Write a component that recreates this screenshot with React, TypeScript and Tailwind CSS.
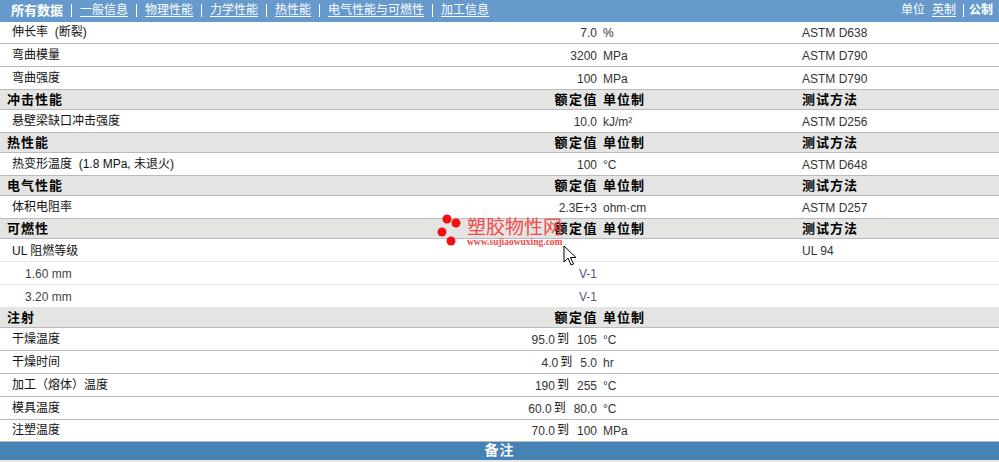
const cjk = "font-['Liberation_Sans','Noto_Sans_CJK_SC',sans-serif]"

type Row =
  | { kind: "head"; title: string; method?: boolean; h: string }
  | { kind: "data"; name: string; value?: string; to?: string; unit?: string; test?: string; h: string; sub?: boolean; faint?: boolean }

const rows: Row[] = [
  { kind: "data", name: "伸长率  (断裂)", value: "7.0", unit: "%", test: "ASTM D638", h: "h-[22px]" },
  { kind: "data", name: "弯曲模量", value: "3200", unit: "MPa", test: "ASTM D790", h: "h-[23px]" },
  { kind: "data", name: "弯曲强度", value: "100", unit: "MPa", test: "ASTM D790", h: "h-[23px]" },
  { kind: "head", title: "冲击性能", method: true, h: "h-[20px]" },
  { kind: "data", name: "悬壁梁缺口冲击强度", value: "10.0", unit: "kJ/m²", test: "ASTM D256", h: "h-[23px]" },
  { kind: "head", title: "热性能", method: true, h: "h-[20px]" },
  { kind: "data", name: "热变形温度  (1.8 MPa, 未退火)", value: "100", unit: "°C", test: "ASTM D648", h: "h-[23px]" },
  { kind: "head", title: "电气性能", method: true, h: "h-[20px]" },
  { kind: "data", name: "体积电阻率", value: "2.3E+3", unit: "ohm·cm", test: "ASTM D257", h: "h-[23px]" },
  { kind: "head", title: "可燃性", method: true, h: "h-[20px]" },
  { kind: "data", name: "UL 阻燃等级", test: "UL 94", h: "h-[23px]", faint: true },
  { kind: "data", name: "1.60 mm", value: "V-1", h: "h-[23px]", sub: true, faint: true },
  { kind: "data", name: "3.20 mm", value: "V-1", h: "h-[23px]", sub: true, faint: true },
  { kind: "head", title: "注射", h: "h-[20px]" },
  { kind: "data", name: "干燥温度", value: "95.0", to: "105", unit: "°C", h: "h-[23px]" },
  { kind: "data", name: "干燥时间", value: "4.0", to: "5.0", unit: "hr", h: "h-[23px]" },
  { kind: "data", name: "加工（熔体）温度", value: "190", to: "255", unit: "°C", h: "h-[23px]" },
  { kind: "data", name: "模具温度", value: "60.0", to: "80.0", unit: "°C", h: "h-[23px]" },
  { kind: "data", name: "注塑温度", value: "70.0", to: "100", unit: "MPa", h: "h-[22px]" },
]

const links = ["一般信息", "物理性能", "力学性能", "热性能", "电气性能与可燃性", "加工信息"]

function HeadRow({ title, method, h }: { title: string; method?: boolean; h: string }) {
  return (
    <div className={`${h} grid grid-cols-[597px_193px_1fr] gap-x-[6px] items-center bg-[#e4e4e2] border-b border-[#bdb9c4] pb-px text-[13px] font-bold leading-none tracking-[1px] text-black`}>
      <div className="flex justify-between pl-[7px]">
        <span>{title}</span>
        <span className="-mr-px tracking-[1.5px]">额定值</span>
      </div>
      <span>单位制</span>
      {method && <span>测试方法</span>}
    </div>
  )
}

function DataRow({ name, value, to, unit, test, h, sub, faint }: { name: string; value?: string; to?: string; unit?: string; test?: string; h: string; sub?: boolean; faint?: boolean }) {
  return (
    <div className={`${h} grid grid-cols-[597px_193px_1fr] gap-x-[6px] items-center border-b ${faint ? "border-[#e6e6ea]" : "border-[#bbbbbb]"} text-[12px] leading-none text-[#333333]`}>
      <div className="flex justify-between">
        <span className={`${sub ? "pl-[25px] text-[#444444]" : "pl-[12px] text-[#111111]"} ${faint ? "pt-px" : ""} whitespace-pre`}>{name}</span>
        <span className={`flex pt-px ${sub ? "text-[#55557f]" : ""}`}>
          {value}
          {to && <span className="ml-[2px] -mt-px text-[#111111]">到</span>}
          {to && <span className="ml-[8px]">{to}</span>}
        </span>
      </div>
      <span className="pt-px">{unit}</span>
      <span className="pt-px">{test}</span>
    </div>
  )
}

export default function App() {
  return (
    <div className={`relative h-[462px] w-[999px] overflow-hidden bg-white ${cjk}`}>
      <nav className="flex h-[22px] items-center justify-between bg-[#6699cc] pb-[2px] pl-[11px] pr-[6px] text-[12px] leading-none text-white">
        <div className="flex items-center">
          <b className="text-[13px]">所有数据</b>
          {links.map((l) => (
            <span key={l} className="flex items-center">
              <span className="mx-[8px] h-[13px] w-px bg-white" />
              <a className="underline underline-offset-2">{l}</a>
            </span>
          ))}
        </div>
        <div className="flex items-center">
          <span>单位</span>
          <a className="ml-[7px] underline underline-offset-2">英制</a>
          <span className="ml-[7px] mr-[5px] h-[13px] w-px bg-white" />
          <b>公制</b>
        </div>
      </nav>

      {rows.map((r, i) =>
        r.kind === "head" ? (
          <HeadRow key={i} title={r.title} method={r.method} h={r.h} />
        ) : (
          <DataRow key={i} {...r} />
        ),
      )}

      <div className="flex h-[18px] items-center justify-center bg-[#4682b4] pb-[3px] text-[14px] font-bold leading-none tracking-[1px] text-white">
        备注
      </div>
      <div className="h-[2px] bg-[#e8e8e8]" />

      {/* watermark */}
      <div className="pointer-events-none absolute left-[437px] top-[214px] h-[36px] w-[130px]">
        <svg className="absolute left-0 top-0" width="26" height="36" viewBox="0 0 26 36">
          <circle cx="10" cy="5" r="4.5" fill="#f01010" />
          <circle cx="19" cy="9" r="4.5" fill="#f01010" />
          <circle cx="5" cy="18" r="4.5" fill="#f01010" />
          <circle cx="14" cy="27" r="4.5" fill="#f01010" />
        </svg>
        <div className="absolute left-[30px] top-[4px] whitespace-nowrap text-[19px] font-normal leading-[20px] text-[#f04a4a]">塑胶物性网</div>
        <div className="absolute left-[30px] top-[23px] whitespace-nowrap font-['Liberation_Serif',serif] text-[9.5px] font-bold leading-[10px] text-[#f04a4a]">www.sujiaowuxing.com</div>
      </div>

      {/* mouse cursor */}
      <svg className="pointer-events-none absolute left-[563px] top-[245px]" width="14" height="22" viewBox="0 0 14 22">
        <path d="M1 1 V17 L5 13 L8 20 L10.5 19 L7.5 12.5 H13 Z" fill="white" stroke="black" strokeWidth="1" />
      </svg>
    </div>
  )
}
